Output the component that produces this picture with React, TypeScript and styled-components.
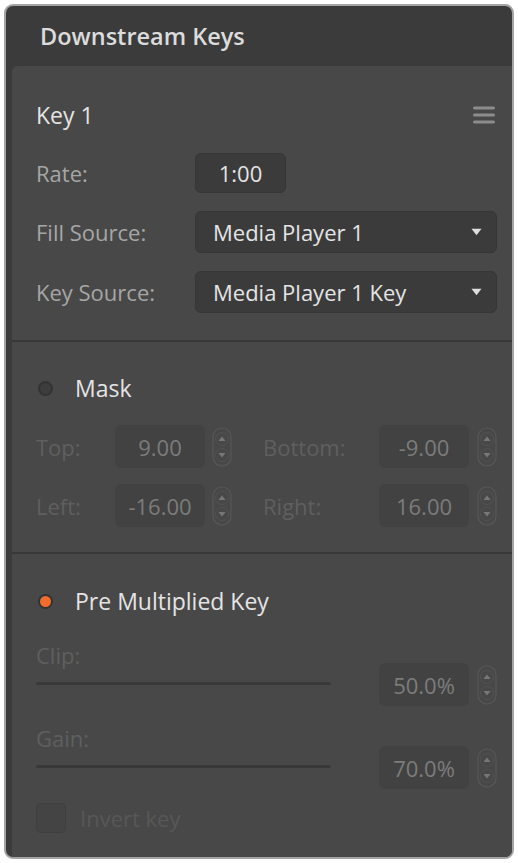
import React from 'react';
import styled, { createGlobalStyle } from 'styled-components';

const c = {
  frame: '#3b3b3b',
  body: '#484848',
  divider: '#383838',
  field: '#3b3b3b',
  fieldOff: '#424242',
  text: '#e4e4e4',
  label: '#a6a6a6',
  off: '#5f5f5f',
  offValue: '#7c7c7c',
};

const GlobalStyle = createGlobalStyle`
  body {
    margin: 0;
    background: #fff;
    font-family: 'Open Sans', 'Liberation Sans', sans-serif;
  }
`;

const Frame = styled.div`
  box-sizing: border-box;
  display: flex;
  flex-direction: column;
  width: 510px;
  height: 855px;
  margin: 4px;
  overflow: hidden;

  border: 2px solid #a4a4a4;
  border-radius: 9px;
  background: ${c.frame};
`;

const Header = styled.header`
  display: flex;
  align-items: center;
  height: 60px;
  padding-left: 34px;
  flex-shrink: 0;

  font-size: 23.5px;
  font-weight: 600;
  color: #dcdcdc;
`;

const Body = styled.main`
  flex: 1;
  margin-left: 6px;
  border-top-left-radius: 6px;
  background: ${c.body};
`;

const Section = styled.section<{ $top: number; $bottom: number }>`
  display: flex;
  flex-direction: column;
  padding: ${(p) => p.$top}px 15px ${(p) => p.$bottom}px 24px;
  border-bottom: 2px solid ${c.divider};

  &:last-child {
    border-bottom: none;
  }
`;

const TitleRow = styled.div`
  display: flex;
  align-items: center;
  justify-content: space-between;
  height: 30px;
`;

const Title = styled.span`
  font-size: 23px;
  color: ${c.text};
`;

const Row = styled.div<{ $mt: number }>`
  display: flex;
  align-items: center;
  margin-top: ${(p) => p.$mt}px;
`;

const Label = styled.span<{ $w?: number; $off?: boolean }>`
  flex-shrink: 0;
  width: ${(p) => (p.$w ? `${p.$w}px` : 'auto')};
  font-size: 22px;
  color: ${(p) => (p.$off ? c.off : c.label)};
`;

const RateBox = styled.div`
  display: flex;
  align-items: center;
  justify-content: center;
  width: 91px;
  height: 40px;
  box-sizing: border-box;
  border: 1px solid #363636;
  border-radius: 6px;
  background: ${c.field};

  font-size: 22px;
  color: ${c.text};
`;

const Select = styled.div`
  flex: 1;
  display: flex;
  align-items: center;
  justify-content: space-between;
  height: 42px;
  box-sizing: border-box;
  padding: 0 14px 0 17px;
  border: 1px solid #363636;
  border-radius: 6px;
  background: ${c.field};

  font-size: 22px;
  color: ${c.text};
`;

const Radio = styled.span<{ $on?: boolean }>`
  width: 15px;
  height: 15px;
  margin: 0 22px 0 2px;
  box-sizing: border-box;
  border-radius: 50%;
  border: 2px solid #333;
  background: ${(p) => (p.$on ? '#f26c2c' : '#3d3d3d')};
`;

const Pair = styled.div`
  display: flex;
  align-items: center;
`;

const Pairs = styled.div<{ $mt: number }>`
  display: flex;
  align-items: center;
  gap: 31px;
  margin-top: ${(p) => p.$mt}px;
`;

const NumBox = styled.div`
  display: flex;
  align-items: center;
  justify-content: center;
  width: 90px;
  height: 43px;
  border-radius: 6px;
  background: ${c.fieldOff};

  font-size: 22px;
  color: ${c.offValue};
`;

const SpinWrap = styled.span<{ $ml: number }>`
  display: flex;
  margin-left: ${(p) => p.$ml}px;
`;

const Param = styled.div<{ $mt: number }>`
  display: flex;
  align-items: flex-end;
  justify-content: space-between;
  margin-top: ${(p) => p.$mt}px;
`;

const ParamLeft = styled.div`
  display: flex;
  flex-direction: column;
  width: 295px;
`;

const ParamLabel = styled(Label)`
  line-height: 22px;
`;

const Track = styled.div`
  height: 3px;
  margin: 16px 0 21px;
  border-radius: 2px;
  background: #393939;
`;

const CheckRow = styled.label`
  display: flex;
  align-items: center;
  gap: 14px;
  margin-top: 14px;
  font-size: 22px;
  color: #575757;
`;

const CheckBox = styled.span`
  width: 30px;
  height: 30px;
  box-sizing: border-box;
  border: 1px solid #3f3f3f;
  border-radius: 5px;
  background: #444;
`;

const MenuWrap = styled.span`
  display: flex;
  margin-right: 2px;
`;

const Menu = () => (
  <MenuWrap>
    <svg width="22" height="18" viewBox="0 0 22 18">
      {[2, 9, 16].map((y) => (
        <rect key={y} x="0" y={y - 1.5} width="22" height="3" rx="1.5" fill="#8c8c8c" />
      ))}
    </svg>
  </MenuWrap>
);

const Caret = () => (
  <svg width="11" height="8" viewBox="0 0 11 8">
    <path d="M0.5 0.8 H10.5 L5.5 7.2 Z" fill="#dedede" />
  </svg>
);

const Spinner = ({ ml }: { ml: number }) => (
  <SpinWrap $ml={ml}>
    <svg width="20" height="40" viewBox="0 0 20 40">
      <rect x="1" y="1" width="18" height="38" rx="9" fill="none" stroke="#585858" strokeWidth="1.2" />
      <circle cx="10" cy="12" r="6.5" fill="none" stroke="#525252" strokeWidth="1" />
      <circle cx="10" cy="28" r="6.5" fill="none" stroke="#525252" strokeWidth="1" />
      <path d="M6.5 14 H13.5 L10 9.5 Z" fill="#777" />
      <path d="M6.5 26 H13.5 L10 30.5 Z" fill="#777" />
    </svg>
  </SpinWrap>
);

const App = () => {
  return (
    <>
      <GlobalStyle />
      <Frame>
        <Header>Downstream Keys</Header>
        <Body>
          <Section $top={34} $bottom={27}>
            <TitleRow>
              <Title>Key 1</Title>
              <Menu />
            </TitleRow>
            <Row $mt={23}>
              <Label $w={159}>Rate:</Label>
              <RateBox>1:00</RateBox>
            </Row>
            <Row $mt={18}>
              <Label $w={159}>Fill Source:</Label>
              <Select>
                Media Player 1
                <Caret />
              </Select>
            </Row>
            <Row $mt={18}>
              <Label $w={159}>Key Source:</Label>
              <Select>
                Media Player 1 Key
                <Caret />
              </Select>
            </Row>
          </Section>

          <Section $top={31} $bottom={25}>
            <TitleRow>
              <Pair>
                <Radio />
                <Title>Mask</Title>
              </Pair>
            </TitleRow>
            <Pairs $mt={22}>
              <Pair>
                <Label $w={79} $off>Top:</Label>
                <NumBox>9.00</NumBox>
                <Spinner ml={7} />
              </Pair>
              <Pair>
                <Label $w={116} $off>Bottom:</Label>
                <NumBox>-9.00</NumBox>
                <Spinner ml={8} />
              </Pair>
            </Pairs>
            <Pairs $mt={16}>
              <Pair>
                <Label $w={79} $off>Left:</Label>
                <NumBox>-16.00</NumBox>
                <Spinner ml={7} />
              </Pair>
              <Pair>
                <Label $w={116} $off>Right:</Label>
                <NumBox>16.00</NumBox>
                <Spinner ml={8} />
              </Pair>
            </Pairs>
          </Section>

          <Section $top={32} $bottom={20}>
            <TitleRow>
              <Pair>
                <Radio $on />
                <Title>Pre Multiplied Key</Title>
              </Pair>
            </TitleRow>
            <Param $mt={28}>
              <ParamLeft>
                <ParamLabel $off>Clip:</ParamLabel>
                <Track />
              </ParamLeft>
              <Pair>
                <NumBox>50.0%</NumBox>
                <Spinner ml={8} />
              </Pair>
            </Param>
            <Param $mt={21}>
              <ParamLeft>
                <ParamLabel $off>Gain:</ParamLabel>
                <Track />
              </ParamLeft>
              <Pair>
                <NumBox>70.0%</NumBox>
                <Spinner ml={8} />
              </Pair>
            </Param>
            <CheckRow>
              <CheckBox />
              Invert key
            </CheckRow>
          </Section>
        </Body>
      </Frame>
    </>
  );
};

export default App;
